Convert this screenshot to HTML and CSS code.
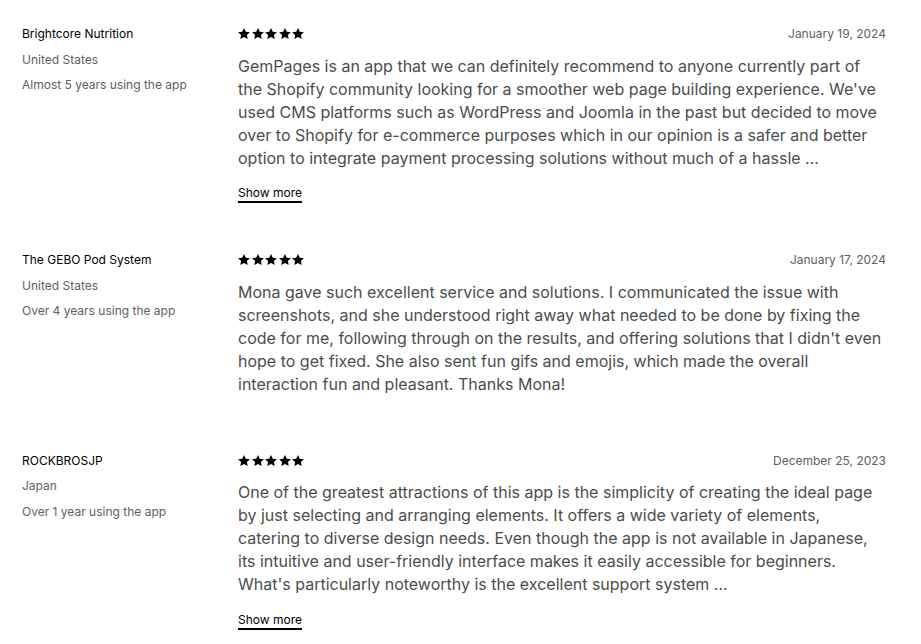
FILE: index.html
```html
<!DOCTYPE html>
<html lang="en">
<head>
<meta charset="utf-8">
<link rel="stylesheet" href="styles.css">
</head>
<body>
<div class="reviews">
  <div class="review">
    <div class="reviewer">
      <div class="name">Brightcore Nutrition</div>
      <div class="meta">United States</div>
      <div class="meta">Almost 5 years using the app</div>
    </div>
    <div class="content">
      <div class="top">
        <div class="stars">
          <svg viewBox="0 0 12 12"><path d="M6 0l1.8 3.7 4.1.5-3 2.85.8 4.05L6 9.1 2.3 11.1l.8-4.05-3-2.85 4.1-.5z"/></svg>
          <svg viewBox="0 0 12 12"><path d="M6 0l1.8 3.7 4.1.5-3 2.85.8 4.05L6 9.1 2.3 11.1l.8-4.05-3-2.85 4.1-.5z"/></svg>
          <svg viewBox="0 0 12 12"><path d="M6 0l1.8 3.7 4.1.5-3 2.85.8 4.05L6 9.1 2.3 11.1l.8-4.05-3-2.85 4.1-.5z"/></svg>
          <svg viewBox="0 0 12 12"><path d="M6 0l1.8 3.7 4.1.5-3 2.85.8 4.05L6 9.1 2.3 11.1l.8-4.05-3-2.85 4.1-.5z"/></svg>
          <svg viewBox="0 0 12 12"><path d="M6 0l1.8 3.7 4.1.5-3 2.85.8 4.05L6 9.1 2.3 11.1l.8-4.05-3-2.85 4.1-.5z"/></svg>
        </div>
        <div class="date">January 19, 2024</div>
      </div>
      <p class="text">GemPages is an app that we can definitely recommend to anyone currently part of the Shopify community looking for a smoother web page building experience. We've used CMS platforms such as WordPress and Joomla in the past but decided to move over to Shopify for e-commerce purposes which in our opinion is a safer and better option to integrate payment processing solutions without much of a hassle …</p>
      <button class="more">Show more</button>
    </div>
  </div>

  <div class="review">
    <div class="reviewer">
      <div class="name">The GEBO Pod System</div>
      <div class="meta">United States</div>
      <div class="meta">Over 4 years using the app</div>
    </div>
    <div class="content">
      <div class="top">
        <div class="stars">
          <svg viewBox="0 0 12 12"><path d="M6 0l1.8 3.7 4.1.5-3 2.85.8 4.05L6 9.1 2.3 11.1l.8-4.05-3-2.85 4.1-.5z"/></svg>
          <svg viewBox="0 0 12 12"><path d="M6 0l1.8 3.7 4.1.5-3 2.85.8 4.05L6 9.1 2.3 11.1l.8-4.05-3-2.85 4.1-.5z"/></svg>
          <svg viewBox="0 0 12 12"><path d="M6 0l1.8 3.7 4.1.5-3 2.85.8 4.05L6 9.1 2.3 11.1l.8-4.05-3-2.85 4.1-.5z"/></svg>
          <svg viewBox="0 0 12 12"><path d="M6 0l1.8 3.7 4.1.5-3 2.85.8 4.05L6 9.1 2.3 11.1l.8-4.05-3-2.85 4.1-.5z"/></svg>
          <svg viewBox="0 0 12 12"><path d="M6 0l1.8 3.7 4.1.5-3 2.85.8 4.05L6 9.1 2.3 11.1l.8-4.05-3-2.85 4.1-.5z"/></svg>
        </div>
        <div class="date">January 17, 2024</div>
      </div>
      <p class="text">Mona gave such excellent service and solutions. I communicated the issue with screenshots, and she understood right away what needed to be done by fixing the code for me, following through on the results, and offering solutions that I didn't even hope to get fixed. She also sent fun gifs and emojis, which made the overall interaction fun and pleasant. Thanks Mona!</p>
    </div>
  </div>

  <div class="review">
    <div class="reviewer">
      <div class="name">ROCKBROSJP</div>
      <div class="meta">Japan</div>
      <div class="meta">Over 1 year using the app</div>
    </div>
    <div class="content">
      <div class="top">
        <div class="stars">
          <svg viewBox="0 0 12 12"><path d="M6 0l1.8 3.7 4.1.5-3 2.85.8 4.05L6 9.1 2.3 11.1l.8-4.05-3-2.85 4.1-.5z"/></svg>
          <svg viewBox="0 0 12 12"><path d="M6 0l1.8 3.7 4.1.5-3 2.85.8 4.05L6 9.1 2.3 11.1l.8-4.05-3-2.85 4.1-.5z"/></svg>
          <svg viewBox="0 0 12 12"><path d="M6 0l1.8 3.7 4.1.5-3 2.85.8 4.05L6 9.1 2.3 11.1l.8-4.05-3-2.85 4.1-.5z"/></svg>
          <svg viewBox="0 0 12 12"><path d="M6 0l1.8 3.7 4.1.5-3 2.85.8 4.05L6 9.1 2.3 11.1l.8-4.05-3-2.85 4.1-.5z"/></svg>
          <svg viewBox="0 0 12 12"><path d="M6 0l1.8 3.7 4.1.5-3 2.85.8 4.05L6 9.1 2.3 11.1l.8-4.05-3-2.85 4.1-.5z"/></svg>
        </div>
        <div class="date">December 25, 2023</div>
      </div>
      <p class="text">One of the greatest attractions of this app is the simplicity of creating the ideal page by just selecting and arranging elements. It offers a wide variety of elements, catering to diverse design needs. Even though the app is not available in Japanese, its intuitive and user-friendly interface makes it easily accessible for beginners. What's particularly noteworthy is the excellent support system …</p>
      <button class="more">Show more</button>
    </div>
  </div>
</div>
</body>
</html>
```

FILE: styles.css
```css
html, body {
  margin: 0;
  padding: 0;
  background: #ffffff;
}

body {
  font-family: Inter, "Noto Sans", "Liberation Sans", sans-serif;
  color: #303030;
}

.reviews {
  padding: 26px 35px 0 22px;
}

.review {
  display: flex;
  padding-bottom: 49px;
}

.reviewer {
  width: 216px;
  flex: none;
  display: flex;
  flex-direction: column;
  gap: 9.5px;
}

.name {
  font-size: 12px;
  line-height: 16px;
  color: #000000;
}

.meta {
  font-size: 12px;
  line-height: 16px;
  color: #616161;
}

.content {
  flex: 1;
  min-width: 0;
}

.top {
  display: flex;
  justify-content: space-between;
  align-items: center;
  height: 16px;
}

.stars {
  display: flex;
  gap: 1.5px;
}

.stars svg {
  width: 12px;
  height: 12px;
  fill: #000000;
  display: block;
}

.date {
  font-size: 12px;
  line-height: 16px;
  color: #616161;
}

.text {
  margin: 12.5px 0 0 0;
  padding-bottom: 8px;
  font-size: 16px;
  line-height: 23px;
  color: #4d4d4d;
}

.more {
  display: block;
  margin-top: 5.5px;
  padding: 0;
  border: none;
  background: none;
  font-family: inherit;
  font-size: 12px;
  line-height: 20px;
  color: #000000;
  border-bottom: 2px solid #000000;
  cursor: pointer;
  height: 20px;
}
```
